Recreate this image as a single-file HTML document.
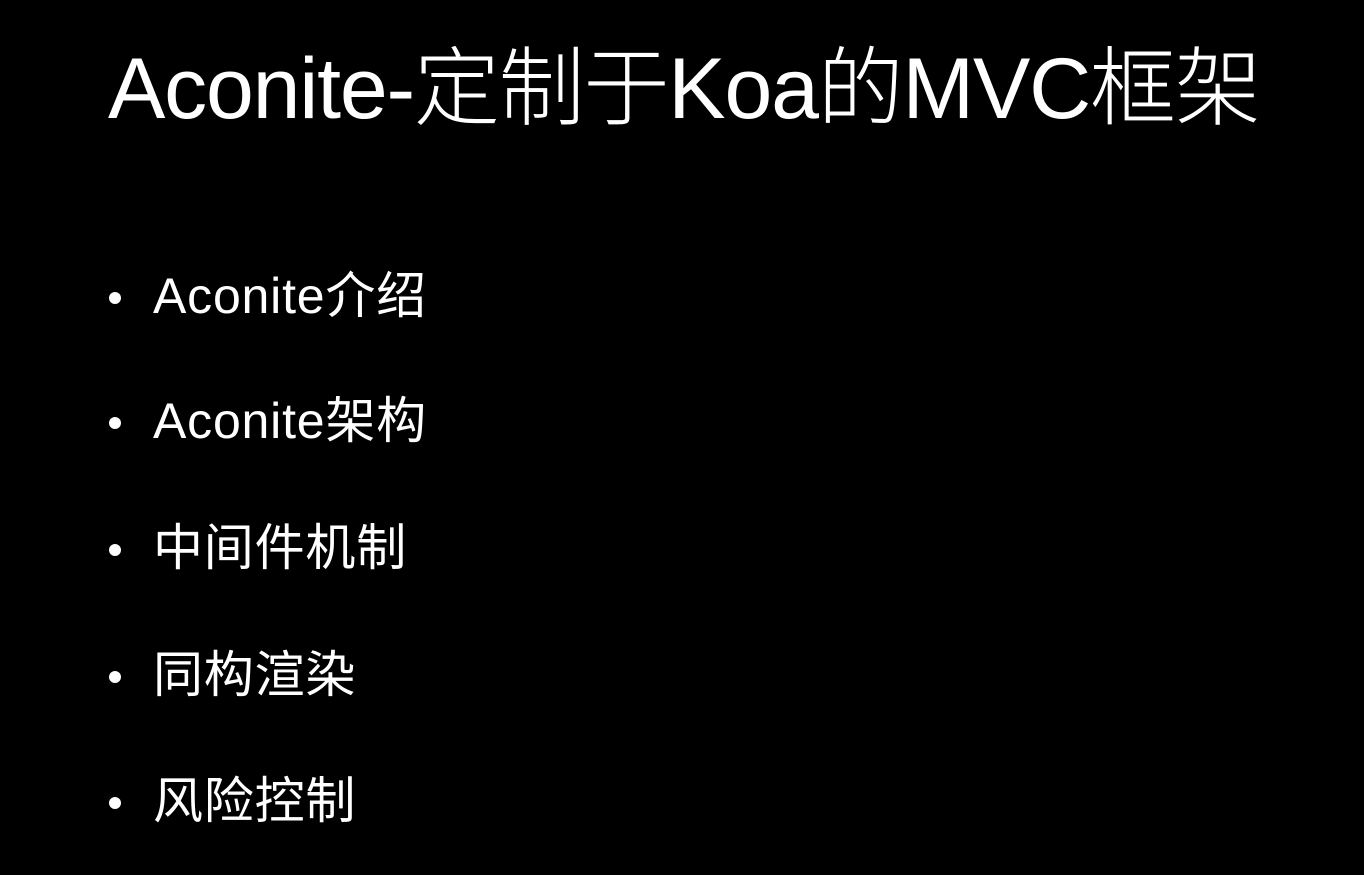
<!DOCTYPE html>
<html><head><meta charset="utf-8"><style>
html,body{margin:0;padding:0;background:#000;width:1364px;height:875px;overflow:hidden}
body{font-family:"Liberation Sans","Noto Sans CJK SC",sans-serif;color:#fff;position:relative}
.t{position:absolute;left:108px;top:39px;font-size:86px;font-weight:300;white-space:nowrap;line-height:100px;letter-spacing:-1.2px}
.b{position:absolute;left:153px;font-size:50px;line-height:60px;white-space:nowrap;letter-spacing:0.8px}
.b:before{content:"";position:absolute;left:-44px;top:26px;width:12px;height:12px;border-radius:50%;background:#fff}
</style></head><body>
<div class="t">Aconite-定制于Koa的MVC框架</div>
<div class="b" style="top:266px">Aconite介绍</div>
<div class="b" style="top:391px">Aconite架构</div>
<div class="b" style="top:518px">中间件机制</div>
<div class="b" style="top:645px">同构渲染</div>
<div class="b" style="top:771px">风险控制</div>
</body></html>
